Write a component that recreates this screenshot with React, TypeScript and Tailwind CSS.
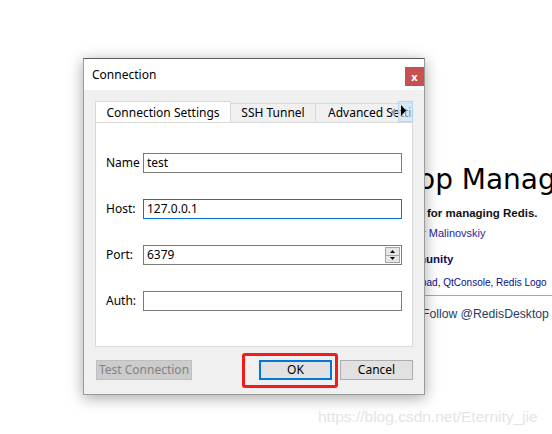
import React from "react";

// Redis Desktop Manager welcome page, mostly hidden behind the dialog
function WelcomePage() {
  return (
    <div className="flex flex-col pl-[418px] pt-[162px] font-['Liberation_Sans',sans-serif] whitespace-nowrap">
      <div className="font-['DejaVu_Sans',sans-serif] text-[28px] leading-[36px] text-black">op Manager</div>
      <div className="ml-[9px] mt-[7px] text-[11.5px] font-bold leading-[16px] text-[#111]">for managing Redis.</div>
      <div className="ml-[4px] mt-[4px] text-[11px] leading-[16px] text-[#1f1fa3]">r Malinovskiy</div>
      <div className="ml-[1px] mt-[10px] text-[11.5px] font-bold leading-[16px] text-[#0b0b5e]">nunity</div>
      <div className="ml-[3px] mt-[8px] text-[10px] leading-[16px] text-black">
        <span className="text-[#0b0b8a]">pad</span>, <span className="text-[#0b0b8a]">QtConsole</span>,{" "}
        <span className="text-[#0b0b8a]">Redis Logo</span>
      </div>
      <div className="ml-[6px] mt-[4px] h-px bg-[#a8a8a8]" />
      <div className="ml-[4px] mt-[9px] text-[12.2px] leading-[18px] text-[#283c63]">Follow @RedisDesktop</div>
    </div>
  );
}

function Field({ label, value, focused, spin }: { label: string; value?: string; focused?: boolean; spin?: boolean }) {
  return (
    <>
      <span className="flex h-[20px] items-center text-[12px] text-black">{label}</span>
      <div
        className={
          "flex h-[20px] items-center border bg-white pl-[3px] text-[12px] text-black " +
          (focused ? "border-[#0078d7]" : "border-[#7a7a7a]")
        }
      >
        <span>{value}</span>
        {spin && (
          <div className="ml-auto mr-[1px] flex h-[16px] w-[15px] flex-col border border-[#a6a6a6] bg-[#e6e6e6]">
            <div className="flex flex-1 items-center justify-center border-b border-[#a6a6a6]">
              <svg width="5" height="3" viewBox="0 0 5 3">
                <path d="M0 3 L2.5 0 L5 3 Z" fill="#000" />
              </svg>
            </div>
            <div className="flex flex-1 items-center justify-center">
              <svg width="5" height="3" viewBox="0 0 5 3">
                <path d="M0 0 L5 0 L2.5 3 Z" fill="#000" />
              </svg>
            </div>
          </div>
        )}
      </div>
    </>
  );
}

function ConnectionDialog() {
  return (
    <div className="absolute left-[83px] top-[58px] flex h-[337px] w-[342px] flex-col border border-[#9b9b9b] border-t-[#5a5a5a] bg-[#f0f0f0] font-['Noto_Sans',sans-serif] shadow-[0_3px_14px_rgba(0,0,0,0.35)]">
      <div className="flex h-[31px] items-start bg-white">
        <span className="ml-[8px] mt-[8px] text-[12px] leading-[16px] text-black">Connection</span>
        <button className="ml-auto mt-[8px] flex h-[19px] w-[19px] items-center justify-center bg-[#c75050] text-[11px] font-bold leading-none text-white">
          x
        </button>
      </div>

      <div className="mx-[11px] mt-[11px] flex flex-col">
        {/* tab bar */}
        <div className="relative flex h-[21px] items-end overflow-hidden text-[12px] text-black">
          <div className="z-10 -mb-px flex h-[22px] w-[136px] shrink-0 items-center justify-center border border-b-0 border-[#d9d9d9] bg-white">
            Connection Settings
          </div>
          <div className="flex h-[19px] w-[85px] shrink-0 items-center justify-center border border-l-0 border-b-0 border-[#d9d9d9] bg-[#f0f0f0]">
            SSH Tunnel
          </div>
          <div className="flex h-[19px] w-[120px] shrink-0 items-center border border-l-0 border-b-0 border-[#d9d9d9] bg-[#f0f0f0] pl-[12px]">
            Advanced Settings
          </div>
          <div className="absolute right-0 top-0 flex h-[21px] items-center">
            <div className="flex h-[21px] w-[10px] items-center justify-center">
              <svg width="4" height="8" viewBox="0 0 4 8">
                <path d="M4 0 L0 4 L4 8 Z" fill="#9a9a9a" />
              </svg>
            </div>
            <div className="flex h-[21px] w-[15px] items-start justify-start border border-[#a9d2f2]/80 bg-[#cce4f7]/60 pl-[2px] pt-[3px]">
              <svg width="5" height="11" viewBox="0 0 5 11">
                <path d="M0 0 L5 5.5 L0 11 Z" fill="#000" />
              </svg>
            </div>
          </div>
        </div>

        {/* tab pane */}
        <div className="h-[225px] border border-[#d9d9d9] bg-white px-[10px] pt-[30px]">
          <div className="grid grid-cols-[37px_1fr] gap-y-[26px]">
            <Field label="Name" value="test" />
            <Field label="Host:" value="127.0.0.1" focused />
            <Field label="Port:" value="6379" spin />
            <Field label="Auth:" />
          </div>
        </div>

        {/* buttons */}
        <div className="mt-[13px] flex items-center text-[12px]">
          <button className="ml-[1px] flex h-[20px] w-[96px] items-center justify-center border border-[#bfbfbf] bg-[#cccccc] text-[#838383]">
            Test Connection
          </button>
          <button className="ml-auto flex h-[20px] w-[73px] items-center justify-center border-2 border-[#0078d7] bg-[#e1e1e1] text-black">
            OK
          </button>
          <button className="ml-[8px] flex h-[20px] w-[73px] items-center justify-center border border-[#adadad] bg-[#e1e1e1] text-black">
            Cancel
          </button>
        </div>
      </div>
    </div>
  );
}

export default function App() {
  return (
    <div className="relative h-[434px] w-[552px] overflow-hidden bg-white">
      <WelcomePage />
      <ConnectionDialog />
      {/* annotation around OK */}
      <div className="absolute left-[242px] top-[353px] h-[35px] w-[96px] rounded-[3px] border-[3px] border-[#f31b1b]" />
      <p className="absolute left-[318px] top-[407px] font-['Liberation_Sans',sans-serif] text-[15.5px] leading-[20px] text-[#e4e4e4]">
        https://blog.csdn.net/Eternity_jie
      </p>
    </div>
  );
}
